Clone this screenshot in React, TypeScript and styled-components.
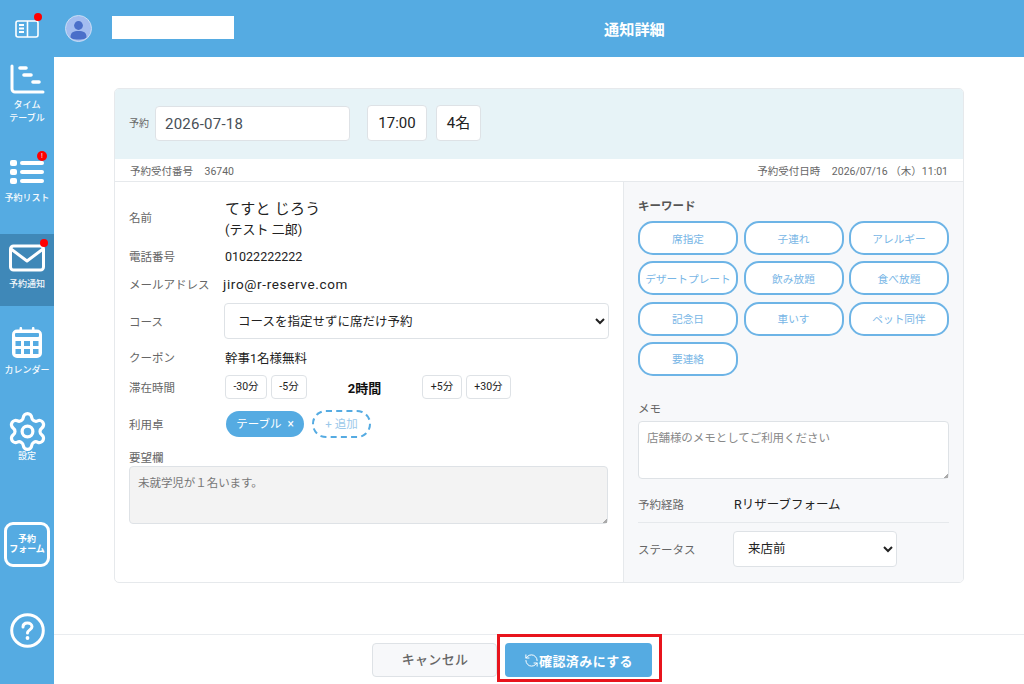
import React from "react";
import styled, { createGlobalStyle } from "styled-components";
import { Settings, RefreshCcw } from "lucide-react";

const Global = createGlobalStyle`
  html, body { margin: 0; padding: 0; background: #fff; }
  body { font-family: Roboto, "Noto Sans CJK JP", sans-serif; color: #222; overflow: hidden; }
  * { box-sizing: border-box; }
`;

const Page = styled.div`
  width: 1024px; height: 684px; display: flex; flex-direction: column; position: relative; overflow: hidden;
`;
const Header = styled.header`
  height: 57px; background: #55abe2; display: flex; align-items: center; flex: none; position: relative;
`;
const BookSlot = styled.div`
  width: 54px; height: 57px; display: flex; align-items: center; justify-content: center; position: relative;
`;
const Dot = styled.span<{ $size?: number; $top: number; $left: number }>`
  position: absolute; top: ${p => p.$top}px; left: ${p => p.$left}px;
  width: ${p => p.$size ?? 8}px; height: ${p => p.$size ?? 8}px; background: #ff0000; border-radius: 50%;
  color: #fff; font-size: 7px; line-height: ${p => p.$size ?? 8}px; text-align: center;
`;
const Avatar = styled.div`
  width: 27px; height: 27px; border-radius: 50%; margin-left: 11px; margin-top: 0; background: #a3bdf0; border: 1px solid #c8def5;
  overflow: hidden; display: flex; flex: none;
`;
const NameBox = styled.div`
  width: 122px; height: 23px; background: #fff; margin-left: 20px; margin-top: -2px; flex: none;
`;
const Title = styled.h1`
  margin: 0; font-size: 15.2px; font-weight: 700; color: #fff; position: absolute; left: 604px; top: 20px; line-height: 20px;
`;
const Body = styled.div`
  flex: 1; display: flex; min-height: 0;
`;
const Sidebar = styled.nav`
  width: 54px; flex: none; background: #55abe2; display: flex; flex-direction: column; align-items: stretch;
`;
const NavItem = styled.div<{ $h: number; $pt: number; $active?: boolean }>`
  height: ${p => p.$h}px; padding-top: ${p => p.$pt}px; background: ${p => (p.$active ? "#3f88b8" : "transparent")};
  display: flex; flex-direction: column; align-items: center; position: relative; flex: none;
`;
const NavLabel = styled.span<{ $mt?: number }>`
  color: #fff; font-size: 9px; line-height: 13px; text-align: center; white-space: nowrap; margin-top: ${p => p.$mt ?? 4}px; font-weight: 500; opacity: .95;
`;
const FormButton = styled.div`
  width: 46px; height: 45px; margin: 0 0 46px 4px; border: 3px solid #fff; border-radius: 9px; color: #fff;
  font-size: 9px; font-weight: 700; line-height: 10px; display: flex; align-items: center; justify-content: center; text-align: center; flex: none;
  padding-bottom: 2px;
`;
const HelpSlot = styled.div`
  display: flex; justify-content: center; flex: none;
`;
const Main = styled.main`
  flex: 1; display: flex; flex-direction: column; min-width: 0;
`;
const Content = styled.div`
  height: 577px; padding: 31px 60px 0 60px; flex: none;
`;
const Card = styled.section`
  width: 850px; height: 495px; border: 1px solid #e6e9ec; border-radius: 5px; display: flex; flex-direction: column; overflow: hidden;
`;
const Band = styled.div`
  height: 70px; flex: none; background: #e7f3f7; display: flex; align-items: flex-start; padding: 16px 0 0 14px;
`;
const BandLabel = styled.span`
  font-size: 10px; color: #666; line-height: 37px; width: 26px;
`;
const DateField = styled.input`
  width: 195px; height: 35px; margin-top: 1px; background: #fff; border: 1px solid #dee2e6; border-radius: 4px; padding: 1px 0 0 9px;
  font-family: inherit; font-size: 15px; color: #495057; letter-spacing: .25px; outline: none;
`;
const TimeChip = styled.div<{ $w: number; $ml: number }>`
  width: ${p => p.$w}px; height: 36px; margin-left: ${p => p.$ml}px; background: #fff; border: 1px solid #dee2e6; border-radius: 4px;
  font-size: 15px; line-height: 35px; text-align: center; color: #222;
`;
const InfoRow = styled.div`
  height: 23px; flex: none; border-bottom: 1px solid #e6e9ec; display: flex; justify-content: space-between; align-items: center;
  padding: 0 15px; font-size: 10.5px; color: #666;
`;
const InfoGroup = styled.span`
  display: flex; align-items: baseline; gap: 11.5px; white-space: pre;
`;
const Columns = styled.div`
  flex: 1; display: flex; min-height: 0;
`;
const Left = styled.div`
  width: 508px; flex: none; padding: 16px 15px 0 14px; display: flex; flex-direction: column;
`;
const Right = styled.div`
  flex: 1; background: #f7f8fa; border-left: 1px solid #e6e9ec; padding: 16px 15px 0 14px; display: flex; flex-direction: column;
`;
const Row = styled.div<{ $h: number; $mt?: number }>`
  display: flex; align-items: center; height: ${p => p.$h}px; flex: none; margin-top: ${p => p.$mt ?? 0}px;
`;
const Label = styled.span<{ $w?: number }>`
  width: ${p => p.$w ?? 96}px; flex: none; font-size: 11.5px; color: #666; white-space: nowrap;
`;
const NameLabel = styled(Label)`
  margin-bottom: 6px;
`;
const NameBlock = styled.div`
  display: flex; flex-direction: column; margin-top: -2px;
`;
const NameMain = styled.span`
  font-size: 15px; line-height: 21px; letter-spacing: .25px; color: #222;
`;
const NameKana = styled.span`
  font-size: 13px; line-height: 20px; color: #222;
`;
const Value = styled.span<{ $size?: number; $ls?: number }>`
  font-size: ${p => p.$size ?? 12}px; color: #222; white-space: nowrap; letter-spacing: ${p => p.$ls ?? 0}px;
`;
const Select = styled.select<{ $w: number; $pl: number }>`
  width: ${p => p.$w}px; height: 36px; background: #fff; border: 1px solid #dee2e6; border-radius: 4px;
  padding: 0 0 0 ${p => p.$pl}px; font-family: inherit; font-size: 12.5px; color: #222; flex: none; outline: none;
`;
const StepButton = styled.div<{ $w: number; $mr?: number }>`
  width: ${p => p.$w}px; height: 24px; margin-right: ${p => p.$mr ?? 0}px; border: 1px solid #dee2e6; border-radius: 4px; background: #fff;
  font-size: 10.5px; line-height: 22px; text-align: center; color: #222; flex: none;
`;
const Duration = styled.span`
  width: 115px; flex: none; font-size: 13px; font-weight: 700; text-align: center; color: #111;
`;
const Chip = styled.div`
  width: 78px; height: 26px; margin-left: 1px; border-radius: 13px; background: #55abe2; color: #fff; font-size: 11.5px; line-height: 26px;
  display: flex; justify-content: center; gap: 6px; flex: none;
`;
const ChipClose = styled.span`
  font-size: 12px;
`;
const AddChip = styled.div`
  width: 59px; height: 28px; margin-left: 8px; border-radius: 14px; border: 2px dashed #55abe2; color: #9cc9ea; font-size: 11.5px; line-height: 24px;
  text-align: center; flex: none;
`;
const RequestLabel = styled.div`
  font-size: 11.5px; color: #666; line-height: 16px; margin-top: 12px;
`;
const TextArea = styled.textarea<{ $bg: string }>`
  display: block; height: 58px; margin-top: 0; background: ${p => p.$bg}; border: 1px solid #dee2e6; border-radius: 4px; padding: 8px 8px;
  font-family: inherit; font-size: 11.5px; line-height: 17px; color: #777; flex: none; width: 100%; outline: none; letter-spacing: -.05px;
  resize: vertical;
  &::placeholder { color: #888; opacity: 1; }
  &::-webkit-resizer { background: linear-gradient(135deg, transparent 86%, #aaa 86%); }
`;
const Keyword = styled.div`
  font-size: 11.5px; font-weight: 700; color: #555; line-height: 16px;
`;
const KeywordGrid = styled.div`
  display: grid; grid-template-columns: 100px 100px 100px; column-gap: 5.5px; row-gap: 6.3px; margin-top: 7px; width: 311px;
`;
const KeywordBtn = styled.div`
  height: 34px; background: #fff; border: 2px solid #6db4e6; border-radius: 15px; color: #78b6e6; font-size: 10.7px;
  display: flex; align-items: center; justify-content: center; white-space: nowrap;
`;
const MemoLabel = styled.div`
  font-size: 11.5px; color: #666; line-height: 16px; margin-top: 25px;
`;
const MemoArea = styled(TextArea)`
  width: 311px; margin-top: 4px;
`;
const RouteRow = styled.div`
  display: flex; align-items: center; height: 44px; padding-top: 7px; width: 311px; border-bottom: 1px solid #e6e9ec; flex: none;
`;
const StatusRow = styled.div`
  display: flex; align-items: center; margin-top: 8px;
`;
const Footer = styled.footer`
  height: 50px; flex: none; border-top: 1px solid #e9ecef; display: flex; justify-content: flex-start; padding: 8px 0 0 318px; gap: 8px;
`;
const CancelBtn = styled.div`
  width: 125px; height: 34px; background: #f7f8fa; border: 1px solid #dee2e6; border-radius: 4px; color: #666; font-size: 13px; font-weight: 500;
  line-height: 32px; text-align: center; letter-spacing: .3px; padding-left: 1px;
`;
const ConfirmBtn = styled.div`
  width: 147px; height: 34px; background: #55abe2; border-radius: 4px; color: #fff; font-size: 13px; font-weight: 700;
  display: flex; align-items: center; justify-content: center; letter-spacing: .4px;
`;
const Annotation = styled.div`
  position: absolute; left: 497px; top: 634px; width: 165px; height: 48px; border: 3px solid #e8141c; pointer-events: none;
`;

const keywords = ["席指定", "子連れ", "アレルギー", "デザートプレート", "飲み放題", "食べ放題", "記念日", "車いす", "ペット同伴", "要連絡"];

export default function App() {
  return (
    <Page>
      <Global />
      <Header>
        <BookSlot>
          <svg width="24" height="18" viewBox="0 0 24 18" fill="none">
            <rect x="1" y="1" width="22" height="16" rx="2" stroke="#fff" strokeWidth="1.6" />
            <path d="M12.500 1v16" stroke="#fff" strokeWidth="1.6" />
            <path d="M4 5h5M4 8.500h5M4 12h5" stroke="#fff" strokeWidth="2" />
          </svg>
          <Dot $size={8} $top={13} $left={34} />
        </BookSlot>
        <Avatar>
          <svg width="25" height="25" viewBox="0 0 25 25">
            <circle cx="12.500" cy="9.500" r="4.400" fill="#4a6fc9" />
            <path d="M4.500 21c0-4.500 3-6 8-6s8 1.500 8 6c0 1-2 2.500-8 2.500s-8-1.500-8-2.500z" fill="#4a6fc9" />
          </svg>
        </Avatar>
        <NameBox />
        <Title>通知詳細</Title>
      </Header>
      <Body>
        <Sidebar>
          <NavItem $h={91} $pt={7}>
            <svg width="36" height="31" viewBox="0 0 36 31" fill="none" stroke="#fff" strokeLinecap="round">
              <path d="M3 2v23a3 3 0 0 0 3 3h28" strokeWidth="3" />
              <path d="M11 4h6M15 11h7M24 18h6" strokeWidth="3.600" />
            </svg>
            <NavLabel>タイム<br />テーブル</NavLabel>
          </NavItem>
          <NavItem $h={86} $pt={9}>
            <svg width="36" height="28" viewBox="0 0 36 28" fill="#fff">
              <rect x="1" y="3" width="7" height="6" rx="2" />
              <rect x="1" y="12" width="7" height="6" rx="2" />
              <rect x="1" y="21" width="7" height="6" rx="2" />
              <rect x="11" y="4" width="24" height="4" rx="2" />
              <rect x="11" y="13" width="24" height="4" rx="2" />
              <rect x="11" y="22" width="24" height="4" rx="2" />
            </svg>
            <Dot $size={10} $top={3} $left={37}>!</Dot>
            <NavLabel $mt={7}>予約リスト</NavLabel>
          </NavItem>
          <NavItem $h={72} $pt={10} $active>
            <svg width="36" height="28" viewBox="0 0 36 28" fill="none" stroke="#fff" strokeWidth="3">
              <rect x="1.500" y="2" width="33" height="24" rx="3" />
              <path d="M2 5l16 12L34 5" strokeLinejoin="round" />
            </svg>
            <Dot $size={8} $top={5} $left={40} />
            <NavLabel $mt={6}>予約通知</NavLabel>
          </NavItem>
          <NavItem $h={94} $pt={21}>
            <svg width="30" height="31" viewBox="0 0 30 31" fill="#fff">
              <path d="M7.500 1.200a1.300 1.300 0 0 1 2.600 0V2.500h9.800V1.200a1.300 1.300 0 0 1 2.600 0V2.500H25a5 5 0 0 1 5 5V26a5 5 0 0 1-5 5H5a5 5 0 0 1-5-5V7.500a5 5 0 0 1 5-5h2.500z" />
              <g fill="#55abe2">
                <rect x="3" y="6" width="24" height="4" rx="1" />
                <rect x="3.500" y="14" width="5.500" height="5" /><rect x="12" y="14" width="6" height="5" /><rect x="21" y="14" width="5.500" height="5" />
                <rect x="3.500" y="22" width="5.500" height="5" /><rect x="12" y="22" width="6" height="5" /><rect x="21" y="22" width="5.500" height="5" />
              </g>
            </svg>
            <NavLabel $mt={6}>カレンダー</NavLabel>
          </NavItem>
          <NavItem $h={122} $pt={10}>
            <Settings size={43} color="#fff" strokeWidth={1.8} />
            <NavLabel $mt={-3}>設定</NavLabel>
          </NavItem>
          <FormButton>予約<br />フォーム</FormButton>
          <HelpSlot>
            <svg width="35" height="35" viewBox="0 0 35 35" fill="none" stroke="#fff">
              <circle cx="17.500" cy="17.500" r="15.800" strokeWidth="3" />
              <path d="M13 14c0-2.600 2-4 4.500-4s4.500 1.600 4.500 3.800c0 3-4.500 3.200-4.500 6.200" strokeWidth="3" strokeLinecap="round" />
              <circle cx="17.500" cy="25" r="1.900" fill="#fff" stroke="none" />
            </svg>
          </HelpSlot>
        </Sidebar>
        <Main>
          <Content>
            <Card>
              <Band>
                <BandLabel>予約</BandLabel>
                <DateField readOnly value="2026-07-18" />
                <TimeChip $w={60} $ml={17}>17:00</TimeChip>
                <TimeChip $w={45} $ml={9}>4名</TimeChip>
              </Band>
              <InfoRow>
                <InfoGroup><span>予約受付番号</span><span>36740</span></InfoGroup>
                <InfoGroup><span>予約受付日時</span><span>2026/07/16 （木）11:01</span></InfoGroup>
              </InfoRow>
              <Columns>
                <Left>
                  <Row $h={42} $mt={1}>
                    <NameLabel>名前</NameLabel>
                    <NameBlock>
                      <NameMain>てすと じろう</NameMain>
                      <NameKana>(テスト 二郎)</NameKana>
                    </NameBlock>
                  </Row>
                  <Row $h={28} $mt={1}>
                    <Label>電話番号</Label>
                    <Value $size={12.5}>01022222222</Value>
                  </Row>
                  <Row $h={28}>
                    <Label $w={94}>メールアドレス</Label>
                    <Value $size={13.5} $ls={0.65}>jiro@r-reserve.com</Value>
                  </Row>
                  <Row $h={36} $mt={5}>
                    <Label $w={95}>コース</Label>
                    <Select $w={385} $pl={9} defaultValue="a"><option value="a">コースを指定せずに席だけ予約</option></Select>
                  </Row>
                  <Row $h={36}>
                    <Label>クーポン</Label>
                    <Value $size={12.5}>幹事1名様無料</Value>
                  </Row>
                  <Row $h={24}>
                    <Label>滞在時間</Label>
                    <StepButton $w={42} $mr={4}>-30分</StepButton>
                    <StepButton $w={36}>-5分</StepButton>
                    <Duration>2時間</Duration>
                    <StepButton $w={40} $mr={4}>+5分</StepButton>
                    <StepButton $w={45}>+30分</StepButton>
                  </Row>
                  <Row $h={28} $mt={11}>
                    <Label>利用卓</Label>
                    <Chip>テーブル<ChipClose>×</ChipClose></Chip>
                    <AddChip>+ 追加</AddChip>
                  </Row>
                  <RequestLabel>要望欄</RequestLabel>
                  <TextArea $bg="#f3f3f3" readOnly value="未就学児が１名います。" />
                </Left>
                <Right>
                  <Keyword>キーワード</Keyword>
                  <KeywordGrid>
                    {keywords.map(k => <KeywordBtn key={k}>{k}</KeywordBtn>)}
                  </KeywordGrid>
                  <MemoLabel>メモ</MemoLabel>
                  <MemoArea $bg="#fff" readOnly placeholder="店舗様のメモとしてご利用ください" />
                  <RouteRow>
                    <Label>予約経路</Label>
                    <Value $size={12.5}>Rリザーブフォーム</Value>
                  </RouteRow>
                  <StatusRow>
                    <Label $w={95}>ステータス</Label>
                    <Select $w={164} $pl={10} defaultValue="a"><option value="a">来店前</option></Select>
                  </StatusRow>
                </Right>
              </Columns>
            </Card>
          </Content>
          <Footer>
            <CancelBtn>キャンセル</CancelBtn>
            <ConfirmBtn><RefreshCcw size={15} strokeWidth={1.6} />確認済みにする</ConfirmBtn>
          </Footer>
        </Main>
      </Body>
      <Annotation />
    </Page>
  );
}
